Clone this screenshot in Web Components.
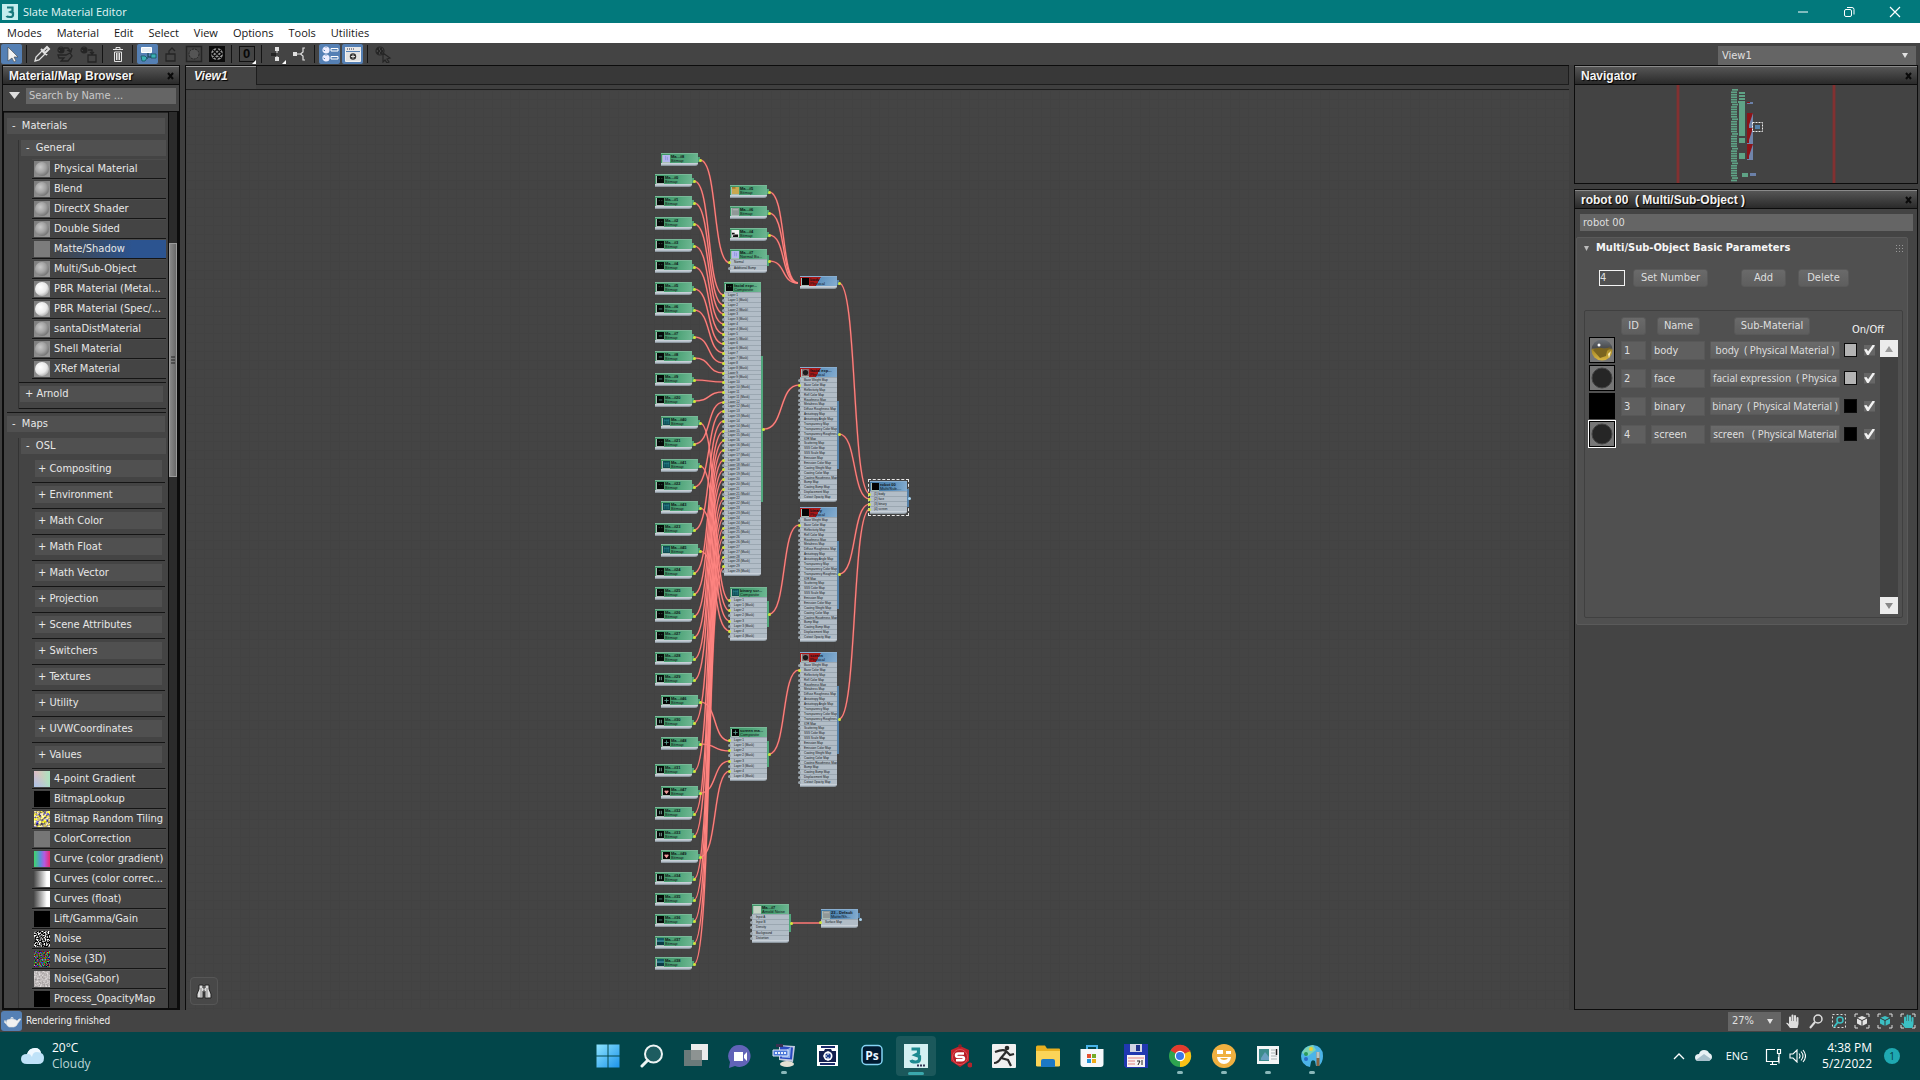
<!DOCTYPE html>
<html lang="en">
<head>
<meta charset="utf-8">
<title>Slate Material Editor</title>
<style>
  html, body { height: 100%; }
  body {
    margin: 0; min-height: 100vh; display: flex; flex-direction: column; overflow: hidden;
    background: #444; color: #e6e6e6;
    --ui: "DejaVu Sans Condensed", "DejaVu Sans", sans-serif;
    --sys: "Open Sans", "Noto Sans", sans-serif;
    --head: "Liberation Sans", Arial, sans-serif;
    font: 11px/16px var(--ui);
  }
</style>
</head>
<body>
<title-bar>Slate Material Editor</title-bar>
<menu-bar></menu-bar>
<tool-bar></tool-bar>
<slate-workspace>
  <dock-panel slot="left" heading="Material/Map Browser"><material-browser></material-browser></dock-panel>
  <graph-view slot="center" name="View1"></graph-view>
  <dock-panel slot="right" heading="Navigator"><nav-map></nav-map></dock-panel>
  <dock-panel slot="right" class="grow" heading="robot 00&nbsp; ( Multi/Sub-Object )"><param-editor></param-editor></dock-panel>
</slate-workspace>
<status-bar>Rendering finished</status-bar>
<task-bar></task-bar>

<script>
const BASE = `*{box-sizing:border-box} button,input,select{font:inherit;color:inherit;margin:0;padding:0;border:0;background:none;border-radius:0;outline:0} svg{display:block}`;

class ShadowElement extends HTMLElement {
  constructor() {
    super();
    const root = this.attachShadow({ mode: 'open' });
    root.innerHTML = `<style>${BASE}${this.constructor.css}</style>` + this.html();
  }
  html() { return '<slot></slot>'; }
}
const icon = (body, w = 24, h = w, box = `0 0 ${w} ${h}`) => `<svg width="${w}" height="${h}" viewBox="${box}" fill="none" aria-hidden="true">${body}</svg>`;

/* ---------- title bar ---------- */
customElements.define('title-bar', class extends ShadowElement {
  static css = `
    :host{display:flex;align-items:center;height:23px;background:#02797c;color:#e4f6f6;font:11px/16px var(--sys);flex:none}
    .logo{margin:0 5px 0 2px} .t{flex:1}
    button{width:46px;height:23px;display:grid;place-items:center}
    button:last-child{margin-right:2px}`;
  html() {
    return `<span class="logo">${icon('<rect width="16" height="16" fill="#c3eeee"/><path d="M5 3.500h5.500v3.500l-2 1 2.500 1v2q0 2-3 2t-3.500-1" stroke="#17797c" stroke-width="2.200"/>', 16)}</span>
    <span class="t"><slot></slot></span>
    <button aria-label="Minimize">${icon('<path d="M1 6h10" stroke="#fff"/>', 12)}</button>
    <button aria-label="Restore">${icon('<rect x="1.500" y="3.500" width="7" height="7" rx="1.500" stroke="#fff"/><path d="M4 1.500h5q2 0 2 2v5" stroke="#fff"/>', 12)}</button>
    <button aria-label="Close">${icon('<path d="M1 1l10 10M11 1L1 11" stroke="#fff" stroke-width="1.200"/>', 12)}</button>`;
  }
});

/* ---------- menu bar ---------- */
customElements.define('menu-bar', class extends ShadowElement {
  static css = `
    :host{display:block;background:#fff;color:#161616;height:20px;flex:none;font:11px/19px var(--sys)}
    nav{display:flex;gap:15px;padding-left:7px}`;
  html() {
    return `<nav>${['Modes', 'Material', 'Edit', 'Select', 'View', 'Options', 'Tools', 'Utilities'].map(t => `<button>${t}</button>`).join('')}</nav>`;
  }
});

/* ---------- drop-down ---------- */
customElements.define('drop-down', class extends ShadowElement {
  static css = `
    :host{display:block;position:relative;background:#656565;color:#e0e0e0}
    select{appearance:none;width:100%;height:100%;padding-left:4px;display:block}
    svg{position:absolute;right:8px;top:7px;pointer-events:none}`;
  html() {
    const v = this.getAttribute('value');
    return `<select aria-label="${this.getAttribute('label')}"><option>${v}</option></select>${icon('<path d="M0 0h6L3 5z" fill="#e2e2e2"/>', 6, 5)}`;
  }
});

/* ---------- tool bar ---------- */
const checker = (cx, cy, r, c) => `<circle cx="${cx}" cy="${cy}" r="${r}" stroke="${c}" stroke-width="1.200"/><path d="M${cx - r + 1} ${cy - r + 1}h2v2h-2zM${cx} ${cy - r + 1}h2v2h-2zM${cx - r + 2} ${cy - 1}h2v2h-2zM${cx + 1} ${cy - 1}h2v2h-2zM${cx - r + 1} ${cy + 1}h2v2h-2zM${cx} ${cy + 1}h2v2h-2z" fill="${c}"/>`;
const TOOLS = [
  ['Select', 'on', '<path d="M5 2v14l4-3 2 4 2-1-2-4h4z" fill="#f2f2f2" stroke="#444" stroke-width=".6"/>'],
  '|',
  ['Pick', '', '<path d="M2 16l1-4 6-6 3 3-6 6z" stroke="#e0e0e0" stroke-width="1.300"/><path d="M8 4l6 6M10 6l4-4 2 2-4 4z" stroke="#e0e0e0" stroke-width="2"/>'],
  ['Put to scene', '', checker(5, 5, 3, '#252525') + '<path d="M8 3h4l3 4M11 5l4 2 1-4M2 10h8l4-2 2 3-4 5H5l3-3H3z" stroke="#252525" stroke-width="1.300"/>'],
  ['Assign', '', checker(5, 5, 3, '#252525') + '<path d="M9 5h4v4M11 7l2 2 2-2M9 10h8v7H9z" stroke="#252525" stroke-width="1.300"/>'],
  '|',
  ['Delete', '', '<path d="M4 4.500h10M7 4V2.500h4V4M5.500 7h7v9.500h-7zM7.500 8v7M9 8v7M10.500 8v7" stroke="#e4e4e4"/>'],
  '|',
  ['Move children', 'on', '<path d="M2.500 2.500h10v5h-10z" fill="#e8eef4" stroke="#fff"/><path d="M9 8v4h4M2 13h7" stroke="#0d3a44"/><path d="M12 9h5v4h-5zM2 11h4l2 2-2 3H3z" fill="#3bb0b5" stroke="#0c4a52" stroke-width=".7"/>'],
  ['Hide slots', '', '<path d="M4 9h9v7H4zM7 9V6l3-3 3 3" stroke="#252525" stroke-width="1.300"/>'],
  ['Background', '', '<path d="M1.500 1.500h15v15h-15z" stroke="#252525" stroke-width="1.500"/><circle cx="9" cy="9" r="5" fill="#555" stroke="#252525" stroke-dasharray="2 1"/>'],
  ['Show in viewport', '', '<path d="M1 1h16v16H1z" fill="#0b0b0b"/><circle cx="9" cy="9" r="6" fill="#999"/><path d="M5 5l8 8M3.500 8l6 6.500M8 3.500l6.500 6M13 5l-8 8M10 3.500L3.500 10M14.500 8L8 14.500" stroke="#0b0b0b" stroke-width="1.300"/>'],
  '|',
  ['Material ID', 'zero', ''],
  '|',
  ['Lay out all', 'flag', '<path d="M7 2h4v4H7zM7 12h4v4H7z" fill="#e0e0e0"/><path d="M3 8h5v3H3z" fill="#222"/><path d="M9 6v2M9 11v1" stroke="#ddd"/>'],
  ['Lay out children', '', '<path d="M2 7h4v4H2z" fill="#e0e0e0"/><path d="M6 9h3M14 3h-2v4L9.500 9l2.500 2v4h2" stroke="#e0e0e0" stroke-width="1.200"/>'],
  '|',
  ['Browser', 'on', checker(5, 5, 3, '#eef') + checker(5, 13, 3, '#eef') + '<path d="M10 3.500h7v2.500h-7zM10 11.500h7V14h-7z" stroke="#fff"/>'],
  ['Parameters', 'on', '<path d="M1.500 2.500h15v14h-15z" stroke="#f4f4f4"/><path d="M1 2h16v4H1z" fill="#e8e8e8"/><path d="M2 7h14v9H2z" fill="#e2e2e2"/><path d="M3 4h7" stroke="#334" stroke-dasharray="1 1"/><circle cx="9" cy="11.500" r="3.200" fill="#333"/><path d="M9 9.500v4M7 11.500h4" stroke="#ddd"/>'],
  '|',
  ['Select by material', '', checker(6, 6, 4, '#252525') + '<path d="M9 8l7 5-3 1 2 3-2 1-2-3-2 2z" stroke="#252525" stroke-width="1.200"/>'],
];
customElements.define('tool-bar', class extends ShadowElement {
  static css = `
    :host{display:flex;height:22px;background:#444;flex:none;padding-right:4px}
    button{width:23px;height:22px;display:grid;place-items:center;position:relative}
    button.on{background:#5580b4;border:1px solid #444;border-radius:3px}
    i{width:7px;display:flex;justify-content:center} i::before{content:"";width:1px;margin:2px 0;background:#141414}
    .zero span{width:16px;height:16px;border:1px solid #111;color:#080808;font:bold 13px/14px var(--head)}
    .zero::after,.flag::after{content:"";position:absolute;right:2px;bottom:1px;border:2px solid;border-color:transparent #fff #fff transparent}
    .sp{flex:1} drop-down{width:198px;margin-top:3px}`;
  html() {
    return TOOLS.map(t => t === '|' ? '<i></i>' : `<button class="${t[1]}" aria-label="${t[0]}">${t[1] === 'zero' ? '<span>0</span>' : icon(t[2], 18)}</button>`).join('')
      + '<span class="sp"></span><drop-down label="View" value="View1"></drop-down>';
  }
});

/* ---------- workspace and dock panels ---------- */
customElements.define('slate-workspace', class extends ShadowElement {
  static css = `
    :host{flex:1;min-height:0;display:grid;grid-template-columns:178px minmax(0,1fr) 344px;gap:5px;padding:0 2px;background:#3f3f3f}
    div{min-height:0;display:flex;flex-direction:column;gap:5px}
    ::slotted(.grow),::slotted([slot=left]),::slotted([slot=center]){flex:1;min-height:0}`;
  html() { return '<div><slot name="left"></slot></div><div><slot name="center"></slot></div><div><slot name="right"></slot></div>'; }
});
customElements.define('dock-panel', class extends ShadowElement {
  static css = `
    :host{display:flex;flex-direction:column;background:#444;border:1px solid #0c0c0c}
    header{height:19px;flex:none;display:flex;align-items:center;padding:0 5px 0 6px;border-top:1px solid #8a8a8a;border-bottom:1px solid #0c0c0c;background:linear-gradient(#555,#2a2a2a);color:#f4f4f4}
    h2{flex:1;margin:0;font:bold 12px/16px var(--head);text-shadow:1px 1px 1px #000;white-space:nowrap}
    ::slotted(*){flex:1;min-height:0}`;
  html() {
    return `<header><h2>${this.getAttribute('heading')}</h2><button aria-label="Close panel">${icon('<path d="M1 1l5 6M6 1L1 7" stroke="#0a0a0a" stroke-width="2"/>', 7, 8)}</button></header><slot></slot>`;
  }
});

/* ---------- material / map browser ---------- */
const noise = (m, f = .7) => `<svg width="16" height="16"><filter id="n" x="0" y="0" width="1" height="1" color-interpolation-filters="sRGB"><feTurbulence type="fractalNoise" baseFrequency="${f}" numOctaves="2"/><feColorMatrix values="${m}"/></filter><rect width="16" height="16" filter="url(#n)"/></svg>`;
customElements.define('map-item', class extends ShadowElement {
  static css = `
    :host{display:flex;align-items:center;height:20px;padding-left:2px;border-bottom:1px solid #151515;border-top:1px solid #4c4c4c;white-space:nowrap}
    :host([selected]){background:linear-gradient(90deg,#444 15%,#2c5490 75%)}
    span{width:16px;height:16px;margin-right:4px;flex:none;overflow:hidden;background:#7c7c7c}
    .grey,.white{background:linear-gradient(135deg,#7c7c7c,#9a9a9a)}
    .grey::before,.white::before{content:"";display:block;width:14px;height:14px;margin:1px;border-radius:50%;background:radial-gradient(circle at 38% 36%,#c8c8c8,#a0a0a0 45%,#6c6c6c 80%,#b8b8b8)}
    .white::before{background:radial-gradient(circle at 38% 36%,#fff,#e8e8e8 50%,#a4a4a4 82%,#fff)}
    .four{background:linear-gradient(45deg,#a8c4ea,transparent 60%),linear-gradient(90deg,#e9b9bd,#a9e3c0)}
    .black{background:#000}.mid{background:#767676}
    .curve{background:linear-gradient(90deg,#3fd66c,#5c8fd8 40%,#b45ae0 65%,#ea2a6a)}
    .ramp{background:linear-gradient(90deg,#4a4a4a,#fff 80%)}`;
  html() {
    const k = this.getAttribute('kind') || 'grey';
    const n = {
      tiles: noise('2 0 0 0 -.25 1.900 0 0 0 -.25 0 0 1.500 0 -.25 0 0 0 0 1', .4),
      noise: noise('4 0 0 0 -1.650 4 0 0 0 -1.650 4 0 0 0 -1.650 0 0 0 0 1', .7),
      rgb: noise('2 0 0 0 -.7 0 2 0 0 -.7 0 0 2 0 -.7 0 0 0 0 1', .7),
      gabor: noise('.5 0 0 0 .5 .5 0 0 0 .48 .5 0 0 0 .48 0 0 0 0 1', .6)
    }[k] || '';
    return `<span class="${k}">${n}</span><slot></slot>`;
  }
});
customElements.define('tree-head', class extends ShadowElement {
  static css = `
    :host{display:block}
    button{display:block;width:100%;height:16px;text-align:left;background:#505050;padding-left:5px;line-height:16px;white-space:pre}
    :host([box]){height:26px;padding:3px 3px 6px;border-bottom:1px solid #151515} :host([box]) button{height:17px;line-height:17px;padding-left:3px}`;
  html() { return '<button><slot></slot></button>'; }
});
customElements.define('material-browser', class extends ShadowElement {
  static css = `
    :host{display:flex;flex-direction:column;color:#e8e8e8}
    .search{height:26px;flex:none;display:flex;align-items:flex-start;padding:3px 3px 0 6px;gap:6px}
    .search svg{margin-top:4px}
    .search input{flex:1;min-width:0;height:16px;background:#656565;padding-left:3px} .search input::placeholder{color:#c9c9c9;opacity:1}
    .tree{flex:1;min-height:0;display:flex;border:1px solid #0c0c0c;background:#444;overflow:hidden}
    .list{flex:1;min-width:0;overflow:hidden;padding:5px 2px 0 0;border-top:1px solid #222}
    .g1{margin-left:3px}.g1 tree-head{margin-right:1px}
    .g2{margin:6px 0 0 11px;border-left:1px solid #333;padding-left:2px}
    .g2>tree-head{margin:0 0 3px}
    .items{margin-left:11px}
    .arn{border-top:1px solid #151515;border-bottom:1px solid #151515;margin:3px 0 3px -2px;height:27px;padding:3px 2px 0 1px}
    .maps{border-top:1px solid #151515;padding-top:3px}
    .maps .g2{padding-bottom:0}
    .bar{width:10px;background:#2b2b2b;border:solid #0c0c0c;border-width:0 1px;padding-top:131px}
    .thumb{height:234px;background:linear-gradient(90deg,#888,#6a6a6a);border:1px solid #9a9a9a;display:grid;place-items:center}`;
  html() {
    const it = (t, k = 'grey', s = '') => `<map-item kind="${k}" ${s}>${t}</map-item>`;
    return `<div class="search">${icon('<path d="M0 0h11L5.500 7z" fill="#ddd"/>', 11, 7)}<input aria-label="Search by Name" placeholder="Search by Name ..."></div>
    <div class="tree"><div class="list">
      <div class="g1"><tree-head>-  Materials</tree-head>
       <div class="g2"><tree-head>-  General</tree-head><div class="items">
        ${it('Physical Material')}${it('Blend')}${it('DirectX Shader')}${it('Double Sided')}${it('Matte/Shadow', 'flat', 'selected')}${it('Multi/Sub-Object')}${it('PBR Material (Metal...', 'white')}${it('PBR Material (Spec/...', 'white')}${it('santaDistMaterial')}${it('Shell Material')}${it('XRef Material', 'white')}
       </div><div class="arn"><tree-head>+ Arnold</tree-head></div></div></div>
      <div class="g1 maps"><tree-head>-  Maps</tree-head>
       <div class="g2"><tree-head>-  OSL</tree-head><div class="items">
        ${['Compositing', 'Environment', 'Math Color', 'Math Float', 'Math Vector', 'Projection', 'Scene Attributes', 'Switchers', 'Textures', 'Utility', 'UVWCoordinates', 'Values'].map(t => `<tree-head box>+ ${t}</tree-head>`).join('')}
        ${it('4-point Gradient', 'four')}${it('BitmapLookup', 'black')}${it('Bitmap Random Tiling', 'tiles')}${it('ColorCorrection', 'mid')}${it('Curve (color gradient)', 'curve')}${it('Curves (color correc...', 'ramp')}${it('Curves (float)', 'ramp')}${it('Lift/Gamma/Gain', 'black')}${it('Noise', 'noise')}${it('Noise (3D)', 'rgb')}${it('Noise(Gabor)', 'gabor')}${it('Process_OpacityMap', 'black')}
       </div></div></div>
    </div><div class="bar"><div class="thumb">${icon('<path d="M1 1h4M1 4h4M1 7h4" stroke="#222"/>', 6, 8)}</div></div></div>`;
  }
});

/* ---------- node graph ---------- */
const THUMBS = {
  face: '<rect width="8" height="8" fill="#060a08"/><path d="M2 3h1M5 3h1" stroke="#4a6e60"/>',
  line: '<rect width="8" height="8" fill="#060a08"/><path d="M2 4.500h4" stroke="#4a8a80"/>',
  normal: '<rect width="8" height="8" fill="#b4b8f0"/><path d="M3 1v5M5 2v4" stroke="#8f93dc"/>',
  gold: '<rect width="8" height="8" fill="#c8a850"/><path d="M0 0h4v2H0z" fill="#a87c28"/>',
  grey: '<rect width="8" height="8" fill="#909898"/><path d="M1 2h6" stroke="#b8bcbc"/>',
  bw: '<rect width="8" height="8" fill="#f4f4f4"/><path d="M0 3h3v2H0zM3 5h4v3H3zM1 6h2v2H1z" fill="#101010"/>',
  teal: '<rect width="8" height="8" fill="#0f4a52"/><path d="M2 1v6M4.500 1v6M6.500 1v6M1 3h6" stroke="#2a8a94" stroke-width=".7"/>',
  pause: '<rect width="8" height="8" fill="#060a08"/><path d="M3 2v4M5 2v4" stroke="#7aa89c"/>',
  cross: '<rect width="8" height="8" fill="#050505"/><path d="M4 1.500v5M1.500 4h5" stroke="#5a9a8c"/>',
  heart: '<rect width="8" height="8" fill="#0a0505"/><path d="M4 7L1.500 4Q1.500 2 4 3.200 6.500 2 6.500 4z" fill="#f09a9a"/>',
  half: '<rect width="8" height="8" fill="#155a66"/><path d="M0 4h8v4H0z" fill="#0c3a44"/><path d="M0 3.500h8" stroke="#5ab4c4"/>',
  ball: '<rect width="8" height="8" fill="#8a6c70"/><circle cx="4" cy="4" r="3" fill="#1c1c1c"/>',
  black: '<rect width="8" height="8" fill="#030303"/>',
  pale: '<rect width="8" height="8" fill="#c4d4c4"/>'
};
customElements.define('graph-node', class extends ShadowElement {
  static css = `
    :host{display:flex;flex-direction:column;position:absolute;width:37px;color:#101418;font:3px/4px var(--head)}
    header{position:relative;height:10px;flex:none;display:flex;gap:1px;padding:1px 0 0 1px;font-size:4px;overflow:hidden;white-space:nowrap;
      background:linear-gradient(100deg,#3d9465,#4da377 60%,#6fb793);border-top:1px solid #79b898}
    :host([tint=blue]) header{background:linear-gradient(100deg,#3f75a0,#5a8fbb 60%,#86add0);border-top-color:#88aed0}
    :host([tint=red]) header{background:linear-gradient(120deg,#a81818 49%,#5f93bf 50%,#86add0);border-top-color:#88aed0}
    header svg{flex:none;border:1px solid #a8bcb4;border-width:0 0 1px 1px}
    header b{display:block}
    ol{flex:1;min-height:0;margin:0;padding:0;list-style:none;display:flex;flex-direction:column;background:#b2bdc7}
    li{flex:1;min-height:0;position:relative;padding-left:4px;border-top:1px solid #9ba7b1;white-space:nowrap;overflow:visible}
    li::before{content:"";position:absolute;left:-2px;top:1px;width:3px;height:3px;border-radius:50%;background:#9aa4ac}
    li.on::before{background:#cfe63c}
    footer{height:3px;flex:none;background:#b4bec8;border-bottom:1px solid #8d979f;border-top:1px solid #c8d0d8;border-bottom-right-radius:3px}
    .strip{position:absolute;left:100%;width:2px;background:#4fa57a}
    :host([tint=blue]) .strip,:host([tint=red]) .strip{background:#5582aa}
    .out{position:absolute;left:calc(100% + 1px);width:3px;height:3px;border-radius:50%;background:#cfe63c}
    .out.off{background:#a9d4f0}
    :host([selected]){outline:1px dashed #e8e8e8;outline-offset:1px}`;
  set node(n) {
    this.style.left = n.x + 'px'; this.style.top = n.y + 'px'; this.style.height = n.h + 'px';
    if (n.tint) this.setAttribute('tint', n.tint);
    if (n.selected) this.setAttribute('selected', '');
    const rows = (n.rows || []).map((r, i) => `<li class="${(n.linked || []).includes(i) ? 'on' : ''}">${r}</li>`).join('');
    const [a, b] = n.strip || [4, 9];
    this.shadowRoot.innerHTML += `<header>${icon(THUMBS[n.thumb], 8)}<span><b>${n.title}</b>${n.sub}</span></header>${rows ? `<ol>${rows}</ol>` : ''}<footer></footer>
      <span class="strip" style="top:${a}px;height:${b - a}px"></span><span class="out ${n.open ? 'off' : ''}" style="top:${n.out - 1}px"></span>`;
  }
  html() { return ''; }
});

const PHYSICAL = ['Base Weight Map', 'Base Color Map', 'Reflectivity Map', 'Refl Color Map', 'Roughness Map', 'Metalness Map', 'Diffuse Roughness Map', 'Anisotropy Map', 'Anisotropy Angle Map', 'Transparency Map', 'Transparency Color Map', 'Transparency Roughnes..', 'IOR Map', 'Scattering Map', 'SSS Color Map', 'SSS Scale Map', 'Emission Map', 'Emission Color Map', 'Coating Weight Map', 'Coating Color Map', 'Coating Roughness Map', 'Bump Map', 'Coating Bump Map', 'Displacement Map', 'Cutout Opacity Map'];
const layers = n => Array.from({ length: n }, (_, i) => [`Layer ${i + 1}`, `Layer ${i + 1} (Mask)`]).flat();
const evens = n => Array.from({ length: n }, (_, i) => i * 2);

function buildGraph() {
  const nodes = [], wires = [];
  const bitmap = (x, y, no, thumb) => nodes.push({ x, y, h: 14, thumb, title: 'Ma...#' + no, sub: 'Bitmap', out: 7 });
  const wire = (x1, y1, x2, y2) => wires.push([x1, y1, x2, y2]);

  /* source bitmaps feeding the 29 layers of the large composite */
  const ys = [84, 106, 127, 149, 170, 192, 213, 240, 261, 283, 304, 347, 390, 433, 476, 497, 519, 540, 562, 583, 626, 674, 717, 739, 782, 803, 824, 846, 867];
  ys.forEach((y, i) => {
    const thumb = i < 6 ? 'face' : i < 11 ? 'line' : i < 19 ? 'face' : i < 25 ? 'pause' : i < 27 ? 'line' : 'half';
    bitmap(469, y, i < 10 ? i : i + 10, thumb);
    wire(508, y + 7, 538, 205 + Math.round(i * 9.7));
  });
  [[326, 40], [369, 41], [411, 43], [454, 45]].forEach(([y, no], i) => { bitmap(475, y, no, 'teal'); wire(514, y + 7, 544, 511 + i * 10); });
  [[605, 46, 'cross'], [647, 48, 'cross'], [696, 47, 'heart'], [760, 49, 'heart']].forEach(([y, no, t], i) => { bitmap(475, y, no, t); wire(514, y + 7, 544, 651 + i * 10); });
  bitmap(475, 63, 8, 'normal'); wire(514, 70, 544, 173);

  /* inputs of the body material */
  [[95, 5, 'gold'], [116, 6, 'grey'], [138, 4, 'bw']].forEach(([y, no, t]) => { bitmap(544, y, no, t); wire(583, y + 7, 612, 193); });
  nodes.push({ x: 544, y: 159, h: 24, thumb: 'normal', title: 'Ma...#7', sub: 'Normal Bu...', rows: ['Normal', 'Additional Bump'], linked: [0], out: 12, strip: [6, 17] });
  wire(583, 171, 612, 193);
  nodes.push({ x: 614, y: 186, h: 14, tint: 'red', thumb: 'black', title: 'body', sub: 'Physical', out: 7 });

  /* composites */
  nodes.push({ x: 538, y: 192, h: 294, thumb: 'face', title: 'facial expr...', sub: 'Composite', rows: layers(29), linked: evens(29), strip: [74, 220], out: 147 });
  nodes.push({ x: 544, y: 497, h: 54, thumb: 'teal', title: 'binary scr...', sub: 'Composite', rows: layers(4), linked: evens(4), strip: [14, 40], out: 27 });
  nodes.push({ x: 544, y: 637, h: 54, thumb: 'cross', title: 'screen ma...', sub: 'Composite', rows: layers(4), linked: evens(4), strip: [14, 40], out: 27 });

  /* physical materials */
  [[277, 'ball', 'facial exp...'], [417, 'black', 'binary'], [562, 'ball', 'screen']].forEach(([y, thumb, title]) =>
    nodes.push({ x: 614, y, h: 135, tint: 'red', thumb, title, sub: 'Physical', rows: PHYSICAL, linked: [1], strip: [34, 102], out: 67 }));
  wire(578, 339, 613, 295); wire(583, 524, 613, 435); wire(583, 664, 613, 580);

  /* multi / sub-object */
  nodes.push({ x: 684, y: 391, h: 33, tint: 'blue', thumb: 'black', title: 'robot 00', sub: 'Multi/Sub-...', rows: ['(1) body', '(2) face', '(3) binary', '(4) screen'], linked: [0, 1, 2, 3], strip: [8, 26], out: 17, open: true, selected: true });
  wire(653, 193, 684, 404); wire(653, 344, 684, 409); wire(653, 484, 684, 414); wire(653, 629, 684, 419);

  /* stand-alone pair */
  nodes.push({ x: 566, y: 814, h: 39, thumb: 'pale', title: 'Ma...#7', sub: 'Arnold Noise', rows: ['Input A', 'Input B', 'Density', 'Background', 'Distortion'], strip: [10, 28], out: 19 });
  nodes.push({ x: 635, y: 819, h: 19, tint: 'blue', thumb: 'grey', title: '23 - Default', sub: 'Matte/Sh...', rows: ['Surface Map'], linked: [0], out: 10, open: true });
  wire(605, 833, 635, 833);
  return { nodes, wires };
}

customElements.define('graph-view', class extends ShadowElement {
  static css = `
    :host{display:flex;flex-direction:column;border-left:1px solid #0c0c0c;border-top:1px solid #0c0c0c;background:#444}
    .tabs{display:flex;height:24px;flex:none;border-bottom:1px solid #1d1d1d;background:#3f3f3f}
    .tab{width:70px;text-align:left;padding:0 0 4px 8px;background:#444;border-top:1px solid #999;font:italic bold 12px/16px var(--head);color:#f4f4f4;text-shadow:1px 1px 1px #000}
    .rest{flex:1;height:19px;border:1px solid #1d1d1d;border-top:0;background:#383838}
    .canvas{flex:1;min-height:0;position:relative;overflow:hidden;background:
      repeating-linear-gradient(90deg,#424242 0 1px,transparent 1px 9px),repeating-linear-gradient(#424242 0 1px,transparent 1px 9px),#444}
    .canvas>svg{position:absolute;inset:0;width:100%;height:100%}
    .find{position:absolute;left:4px;bottom:5px;width:28px;height:28px;border:1px solid #565656;border-radius:4px;background:#484848;display:grid;place-items:center}`;
  html() {
    return `<div class="tabs"><button class="tab">${this.getAttribute('name')}</button><div class="rest"></div></div>
    <div class="canvas"><svg fill="none"></svg><button class="find" aria-label="Zoom and find">${icon('<path d="M3 2h4v3h2V2h4v4l2 5v4H9V8H7v7H1v-4l2-5z" fill="#dcdcdc" stroke="#222"/><path d="M8 3v6M5 5v9M11 5v9" stroke="#888"/>', 16)}</button></div>`;
  }
  connectedCallback() {
    const { nodes, wires } = buildGraph();
    const canvas = this.shadowRoot.querySelector('.canvas');
    const d = wires.map(([a, b, c, e]) => { const m = (a + c) / 2; return `M${a} ${b}C${m + 3} ${b} ${m - 3} ${e} ${c} ${e}`; });
    canvas.querySelector('svg').innerHTML = d.map(p => `<path d="${p}" stroke="#c04848" stroke-width="2" opacity=".6"/>`).join('') + d.map(p => `<path d="${p}" stroke="#fd8480" stroke-width="1.200"/>`).join('');
    nodes.forEach(n => { const el = document.createElement('graph-node'); el.node = n; canvas.append(el); });
  }
});

/* ---------- navigator ---------- */
customElements.define('nav-map', class extends ShadowElement {
  static css = `:host{display:block;height:98px;background:#434343} svg{margin:auto}`;
  html() {
    const col = Array.from({ length: 38 }, (_, i) => `<rect x="${156 + (i % 6 === 0 ? 1 : 0)}" y="${4 + i * 2.45}" width="6" height="1.700"/>`).join('');
    const phys = [28, 43, 59].map(y => `<path d="M172 ${y}h6v16h-6z" fill="#7185ab"/><path d="M172 ${y}h6l-4 12v3h-2z" fill="#8c1418"/>`).join('');
    return icon(`<path d="M103 0v98M259 0v98" stroke="#783232" stroke-width="3"/><path d="M103 0v98M259 0v98" stroke="#8c3030"/>
      <g fill="#5fa386">${col}<path d="M164 7h6v2h-6zM164 10h6v2h-6zM164 13h6v2h-6zM163 16h7v2h-7zM164 18h6v33h-6zM164 53h6v5h-6zM164 68h6v6h-6zM167 88h6v4h-6z"/></g>
      <path d="M172 17h6v2h-6zM175 88h6v3h-6z" fill="#6b80a8"/><path d="M172 17h3v1h-3z" fill="#8c1418"/>${phys}
      <rect x="180" y="40" width="5" height="4" fill="#5582aa"/><rect x="177.500" y="37.500" width="10" height="9" stroke="#eee" stroke-dasharray="2 1"/>`, 342, 98);
  }
});

/* ---------- parameter editor ---------- */
customElements.define('param-editor', class extends ShadowElement {
  static css = `
    :host{display:block;padding:5px 4px 0 5px;color:#dedede}
    .name{display:block;width:100%;height:17px;background:#656565;padding-left:3px}
    section{background:#505050;margin:6px 5px 0 -4px;border:1px solid #5a5a5a;border-radius:2px;padding:0 4px 6px 7px}
    h3{margin:0;height:20px;display:flex;align-items:center;gap:7px;font:bold 11px/18px var(--ui);color:#f6f6f6}
    h3 span{flex:1}
    .cmds{display:flex;align-items:center;margin:10px 0 0 15px;height:19px}
    .cmds input{width:26px;height:16px;border:1px solid #f4f4f4;padding:0;margin-right:8px}
    .btn{height:18px;border-radius:3px;background:linear-gradient(#6a6a6a,#5e5e5e);border:1px solid #595959;padding:0;white-space:pre}
    .box{margin-top:23px;height:308px;border:1px solid #404040;display:flex;border-radius:2px;padding:5px 4px 2px 4px}
    table{flex:1;border-collapse:collapse;table-layout:fixed;width:100%;align-self:flex-start}
    td,th{padding:0;font-weight:normal;text-align:center} thead tr{height:20px} tbody tr{height:28px}
    th.on{vertical-align:bottom;text-align:left;padding-left:10px;color:#f4f4f4;line-height:12px;white-space:nowrap}
    .f{display:block;width:calc(100% - 5px);height:19px;background:#5f5f5f;border:1px solid #585858;padding-left:2px;text-align:left}
    .sub{width:130px;display:block;border-radius:1px;font:10px/16px "Noto Sans",sans-serif}
    .th{display:block;width:26px;height:26px;border:1px solid #000;background:#777;padding:0}
    .th.bk{background:#000}.th.sel{outline:1px solid #fff}
    .sw{display:block;width:13px;height:14px;border:1px solid #0c0c0c;margin-left:2px}
    input[type=checkbox]{appearance:none;display:block;width:11px;height:11px;margin:0 auto;background:#666;clip-path:inset(0)}
    input[type=checkbox]::before{content:"";display:block;width:11px;height:11px;background:#f2f2f2;clip-path:polygon(0 45%,22% 40%,38% 62%,80% 0,100% 10%,42% 95%,28% 95%)}
    .sb{width:18px;display:flex;flex-direction:column;margin-top:24px;background:#424242;justify-content:space-between;margin-bottom:1px}
    .sb button{height:17px;background:#ececec;display:grid;place-items:center}`;
  html() {
    const dark = '<circle cx="12" cy="12" r="10" fill="#262626"/><circle cx="12" cy="12" r="10" stroke="#444"/>';
    const gold = '<defs><linearGradient id="g" x2="0" y2="1"><stop stop-color="#6a7078"/><stop offset=".4" stop-color="#4a4c4e"/><stop offset=".5" stop-color="#a88a28"/><stop offset="1" stop-color="#d8b440"/></linearGradient></defs><circle cx="12" cy="12" r="10.500" fill="url(#g)"/><path d="M3 12q6-4 11-1l7-2-4 4-1 5-6 2z" fill="#7a6420"/><circle cx="9" cy="7" r="1.500" fill="#fff"/><path d="M18 16l3-3-2 7z" fill="#fff3c0"/>';
    const row = (i, n, s, sw, th, cls = '') => `<tr><td><button class="th ${cls}" aria-label="Preview ${n}">${th ? icon(th, 24) : ''}</button></td><td><input class="f" aria-label="ID" value="${i}"></td><td><input class="f" aria-label="Name" value="${n}"></td><td><button class="btn sub">${s}</button></td><td><button class="sw" style="background:${sw}" aria-label="Color"></button></td><td><input type="checkbox" checked aria-label="On/Off"></td></tr>`;
    return `<input class="name" aria-label="Material name" value="robot 00">
    <section><h3>${icon('<path d="M0 0h5L2.500 5z" fill="#bbb"/>', 5)}<span>Multi/Sub-Object Basic Parameters</span>${icon('<path d="M0 .5h7M0 3.500h7M0 6.500h7" stroke="#999" stroke-dasharray="1 2"/>', 7)}</h3>
      <div class="cmds"><input aria-label="Number of materials" value="4"><button class="btn" style="width:75px">Set Number</button><button class="btn" style="width:45px;margin-left:33px">Add</button><button class="btn" style="width:51px;margin-left:12px">Delete</button></div>
      <div class="box"><table><colgroup><col style="width:32px"><col style="width:30px"><col style="width:59px"><col style="width:132px"><col style="width:17px"><col></colgroup>
       <thead><tr><th></th><th><button class="btn" style="width:25px;display:block">ID</button></th><th><button class="btn" style="width:43px;display:block;margin-left:6px">Name</button></th><th><button class="btn" style="width:76px;display:block;margin-left:24px">Sub-Material</button></th><th class="on" colspan="2">On/Off</th></tr></thead>
       <tbody>${row(1, 'body', 'body  ( Physical Material )', '#b4b4b4', gold)}${row(2, 'face', 'facial expression  ( Physica', '#b4b4b4', dark)}${row(3, 'binary', 'binary  ( Physical Material )', '#000', '', 'bk')}${row(4, 'screen', 'screen   ( Physical Material', '#000', dark, 'sel')}</tbody></table>
       <div class="sb"><button aria-label="Scroll up">${icon('<path d="M0 6h8L4 0z" fill="#999"/>', 8, 6)}</button><button aria-label="Scroll down">${icon('<path d="M0 0h8L4 6z" fill="#888"/>', 8, 6)}</button></div></div>
    </section>`;
  }
});

/* ---------- status bar ---------- */
customElements.define('status-bar', class extends ShadowElement {
  static css = `
    :host{display:flex;align-items:center;height:22px;background:#444;flex:none;color:#eee;font-size:10px}
    .pot{width:21px;height:20px;margin:0 4px 0 1px;background:#5580b4;border-radius:3px;display:grid;place-items:center}
    .t{flex:1} drop-down{width:53px;height:19px;font-size:11px}
    .v{width:23px;height:20px;display:grid;place-items:center} .v:last-child{margin-right:1px}`;
  html() {
    const hand = c => `<path d="M5 15q-2-3-4-5 1-1 3 1V4.500q0-1 1-1t1 1V8h.5V2.500q0-1 1-1t1 1V8H9V3q0-1 1-1t1 1v5.500h.5V5q0-1 1-1t1 1v6l-1 4z" fill="${c}"/>`;
    const frame = '<path d="M1 4V1h3M12 1h3v3M1 12v3h3M12 15h3v-3" stroke="#ddd"/>';
    const cube = c => `<path d="M8 3l5 2v5.500L8 13 3 10.500V5z" fill="${c}"/><path d="M3 5l5 2.500L13 5M8 7.500V13" stroke="#333"/>`;
    const v = [['Pan', hand('#dedede')], ['Zoom', '<circle cx="10" cy="6" r="4" stroke="#ddd" stroke-width="1.500"/><path d="M7 9l-5 6" stroke="#ddd" stroke-width="2"/>'], ['Zoom region', '<path d="M1.500 1.500h13v13h-13z" stroke="#ddd" stroke-dasharray="2 2"/><circle cx="9" cy="7" r="3" fill="#444" stroke="#3cc0c4" stroke-width="1.500"/><path d="M7 9l-4 5" stroke="#3cc0c4" stroke-width="2"/>'], ['Zoom extents', frame + cube('#e4e4e4')], ['Zoom extents selected', frame + cube('#3cc0c4')], ['Pan to selected', frame + hand('#3cc0c4')]];
    return `<button class="pot" aria-label="Render">${icon('<path d="M4 8q-2 5 2 7h5q3-1 4-4l3-4q-2-1-4 2l-1-1q-4-2-9 0zM2 8q-2 3 2 4" fill="#f0f0f0" stroke="#ddd" stroke-width=".6"/><path d="M7 6.500q1-1.500 2-1.500t2 1.500z" fill="#f0f0f0"/>', 18)}</button><span class="t"><slot></slot></span>
     <drop-down label="Zoom" value="27%"></drop-down>${v.map(([l, p]) => `<button class="v" aria-label="${l}">${icon(p, 16)}</button>`).join('')}`;
  }
});

/* ---------- desktop task bar ---------- */
const APPS = [
  ['Start', '', '<defs><linearGradient id="w" x2="1" y2="1"><stop stop-color="#8ee4ff"/><stop offset="1" stop-color="#1c94ea"/></linearGradient></defs><path d="M.5.5h11v11H.5zM12.500.5h11v11h-11zM.5 12.500h11v11H.5zM12.500 12.500h11v11h-11z" fill="url(#w)"/>'],
  ['Search', '', '<circle cx="13.500" cy="10" r="8.500" fill="#1d5c60" stroke="#eef4f4" stroke-width="2"/><path d="M7.500 16.500L2 22" stroke="#eef4f4" stroke-width="3" stroke-linecap="round"/>'],
  ['Task view', '', '<path d="M7 0h17v16H7z" fill="#ececec"/><path d="M0 6h18v16H0z" fill="#7c8482" opacity=".85"/>'],
  ['Chat', '', '<path d="M12 1a11 11 0 1 1-5 21l-6 2 1-6A11 11 0 0 1 12 1z" fill="#6163b8"/><path d="M6 8h9v9H6zM16 11l3-3v9l-3-3z" fill="#fff"/>'],
  ['Display settings', 'run', '<path d="M7 1l16 1-2 16-14-2z" fill="#c2cae0"/><path d="M8 2l13 1.500-1 12-12-1z" fill="#2a4ac0"/><path d="M10 9l9-6-1 11-8-.5z" fill="#8fb0ec"/><path d="M1 6h15v6H1z" fill="#4a78d8" stroke="#dfe8fa"/><path d="M3 9h11" stroke="#e8f0ff" stroke-width="2" stroke-dasharray="2 1"/><ellipse cx="15" cy="20" rx="7" ry="3" fill="#e4e0d4"/><path d="M4 0h7v3H4z" fill="#3a3050"/>'],
  ['Camera', '', '<path d="M1 1h21v21H1z" fill="#fff"/><path d="M5 2h14v2H5zM4 19h15v2H4z" fill="#1a2a6a"/><path d="M3 7h5l1-2h6l1 2h4v11H3z" fill="#14204e"/><circle cx="12" cy="12" r="4.500" fill="#fff"/><circle cx="12" cy="12" r="2.800" fill="#1a3a8a"/><path d="M12 7v4M12 13v4M7 12h4" stroke="#fff"/>'],
  ['Photoshop', '', '<rect x="2" y="1.500" width="20" height="19" rx="4" fill="#001a30" stroke="#84d4f4" stroke-width="1.500"/>', 'Ps'],
  ['3ds Max', 'act', '<path d="M0 0h24v24H0z" fill="#d4f0f2"/><path d="M7.500 5h7v4.500l-3 1.500 4 1.500v2.500q0 3-4 3t-4.500-2" stroke="#1c8a90" stroke-width="3.200"/><path d="M13 21.500h8" stroke="#335" stroke-width="2" stroke-dasharray="2 1"/>'],
  ['Substance', '', '<path d="M12 2l9 4v11l-9 6-9-6V6z" fill="#c4242c"/><circle cx="12" cy="2" r="1.800" fill="#8c2028"/><circle cx="22" cy="21" r="2.500" fill="#b4242c"/><circle cx="12" cy="13" r="7.500" fill="#b81e26" stroke="#e05058"/><path d="M16 9.500H10q-2 0-2 1.700t2 1.700h4q2 0 2 1.700t-2 1.700H8" stroke="#fff" stroke-width="2.500"/>'],
  ['ZBrush', '', '<rect width="24" height="24" rx="1" fill="#f0f0f0"/><circle cx="15" cy="4" r="2.300" fill="#2a2a2a"/><path d="M3 8q8-3 11-1l4 4 4-1M14 8l-5 6 7 2 3 6M9 14q-3 5-7 5" stroke="#2a2a2a" stroke-width="2.200"/>'],
  ['Files', '', '<path d="M0 3q0-1.500 1.500-1.500H9l2 3h12q1 0 1 1V22H0z" fill="#e8b020"/><path d="M0 7h24v14q0 1.500-1.500 1.500h-21Q0 22.500 0 21z" fill="#fbd458"/><path d="M5 17q0-2 2-2h10q2 0 2 2v6H5z" fill="#1c78c4"/>'],
  ['Store', '', '<path d="M7 6V2h10v4" stroke="#49b4e8" stroke-width="2"/><path d="M.5 5h23v15q0 3-3 3h-17q-3 0-3-3z" fill="#f6f8fa"/><path d="M7 10h4v4H7z" fill="#e45030"/><path d="M12 10h4v4h-4z" fill="#74ac28"/><path d="M7 15h4v4H7z" fill="#2494d8"/><path d="M12 15h4v4h-4z" fill="#f0ac18"/>'],
  ['Total Commander', '', '<path d="M0 0h24v24H2l-2-2z" fill="#2038b0"/><path d="M6 0h12v8H6z" fill="#d0d4e4"/><path d="M12 1h4v6h-4z" fill="#20348c"/><path d="M3 11h18v12H3z" fill="#f8f4f4"/><path d="M4 14h16M4 17h7M4 20h7" stroke="#e08080"/><path d="M13 17h3l-2 4M18 16v5" stroke="#222"/>'],
  ['Chrome', 'run', '<circle cx="12" cy="12" r="11" fill="#2ea44f"/><path d="M12 12L2.500 6.500A11 11 0 0 1 22 7z" fill="#e33b2e"/><path d="M12 12L22 7A11 11 0 0 1 12 23z" fill="#fbc116"/><path d="M12 7h10.500" stroke="#e33b2e"/><circle cx="12" cy="12" r="5.200" fill="#fff"/><circle cx="12" cy="12" r="4" fill="#3b78e7"/>'],
  ['Emoji', 'run', '<circle cx="12" cy="12" r="12" fill="#f0b040"/><path d="M5 6h6v4H5zM14 7h5v3h-5z" fill="#fff"/><path d="M5 13h14q-1 7-7 7t-7-7z" fill="#fff"/><path d="M8 14h8q-1 2-4 2t-4-2z" fill="#f0b040"/>'],
  ['Viewer', 'run', '<path d="M1 2h22v18H1z" fill="#f4f6f6"/><path d="M3 5h10v12H3z" fill="#3c8c8c"/><path d="M5 14l4-6 4 5v3H5z" fill="#68a0c0"/><path d="M15 6h4M15 9h4M15 12h6M15 15h6" stroke="#a8b4b4"/><path d="M20.500 5v6" stroke="#222" stroke-width="1.500"/>'],
  ['Paint', 'run', '<path d="M13 1q10 1 10 11 0 6-4 10h-3l-1-5q-3-2-4 1l-1 5Q1 21 1 12 2 2 13 1z" fill="#4cb4e8"/><path d="M2 9Q5 2 13 1l3 5-8 6z" fill="#7cd4b4"/><circle cx="6" cy="10" r="2" fill="#2a9a5c"/><circle cx="11" cy="5" r="2" fill="#e8d038"/><circle cx="6" cy="15" r="2" fill="#2c6cc8"/><path d="M18 8v14" stroke="#8a6440" stroke-width="3"/><path d="M18 8v6" stroke="#b8c4c4" stroke-width="3"/>'],
];
customElements.define('task-bar', class extends ShadowElement {
  static css = `
    :host{display:grid;grid-template-columns:1fr auto 1fr;align-items:center;height:48px;background:#02464a;color:#fff;flex:none;font:12px/16px var(--sys)}
    .w{display:flex;align-items:center;gap:8px;padding-left:21px;text-align:left;margin-right:auto} .w span{display:block} .w .c{color:#bcd6d8}
    .apps{display:flex}
    .apps button{width:44px;height:48px;display:grid;place-items:center;position:relative}
    .ps{position:absolute;font:bold 12px/14px var(--sys);color:#e8f6ff}
    .act::before{content:"";position:absolute;inset:4px 2px;border-radius:4px;background:#1b585b}
    .act svg{position:relative}
    .run::after,.act::after{content:"";position:absolute;bottom:6px;width:6px;height:3px;border-radius:2px;background:#8ab8ba}
    .act::after{width:16px;background:#3aa8ac;bottom:5px}
    .tray{display:flex;align-items:center;justify-content:flex-end;padding-right:20px}
    .tray .l{font-size:11px;margin:0 17px 0 14px}
    .time{text-align:right;margin:0 12px 0 16px}
    .badge{width:16px;height:16px;border-radius:50%;background:#1fa9b2;color:#043f44;font:10px/16px var(--sys);text-align:center}`;
  html() {
    return `<button class="w">${icon('<path d="M6 17q-6 0-6-5t6-5q2-6 8-6 5 0 6 5 3 1 3 5 0 6-6 6z" fill="#bfe2f8"/><path d="M6 7q2-6 8-6 5 0 6 5-8-3-9 4-2-4-5-3z" fill="#eef8ff"/>', 23, 18)}<span><span>20°C</span><span class="c">Cloudy</span></span></button>
    <div class="apps">${APPS.map(([l, c, p, t]) => `<button class="${c}" aria-label="${l}">${icon(p, 24)}${t ? `<span class="ps">${t}</span>` : ''}</button>`).join('')}</div>
    <div class="tray"><button aria-label="Hidden icons">${icon('<path d="M1 7l5-5 5 5" stroke="#fff" stroke-width="1.300"/>', 12, 8)}</button>
     <span style="margin-left:10px">${icon('<path d="M4 11q-4 0-4-3.500T4 4q1-4 5-4 4 0 5 3 3 1 3 4t-4 4z" fill="#e8f0f4"/><path d="M1 10L9 4l7 5q-1 2-3 2H4q-2 0-3-1z" fill="#a8c0cc"/>', 17, 12)}</span>
     <span class="l">ENG</span>
     ${icon('<path d="M10 1.500H1.500v12h12V9M5 16.500h7M7.500 13v3M12.500 1.500h3v4h-3zM14 5.500v10" stroke="#fff" stroke-width="1.200"/>', 17)}
     <span style="margin-left:7px">${icon('<path d="M1 5h3l4-4v12L4 9H1zM10 4.500q2 2.500 0 5M12 2.500q4 4.500 0 9M14 1q5 6 0 12" stroke="#fff" stroke-width="1.100"/>', 17, 14)}</span>
     <span class="time">4:38 PM<br>5/2/2022</span><span class="badge">1</span></div>`;
  }
});
</script>
</body>
</html>
